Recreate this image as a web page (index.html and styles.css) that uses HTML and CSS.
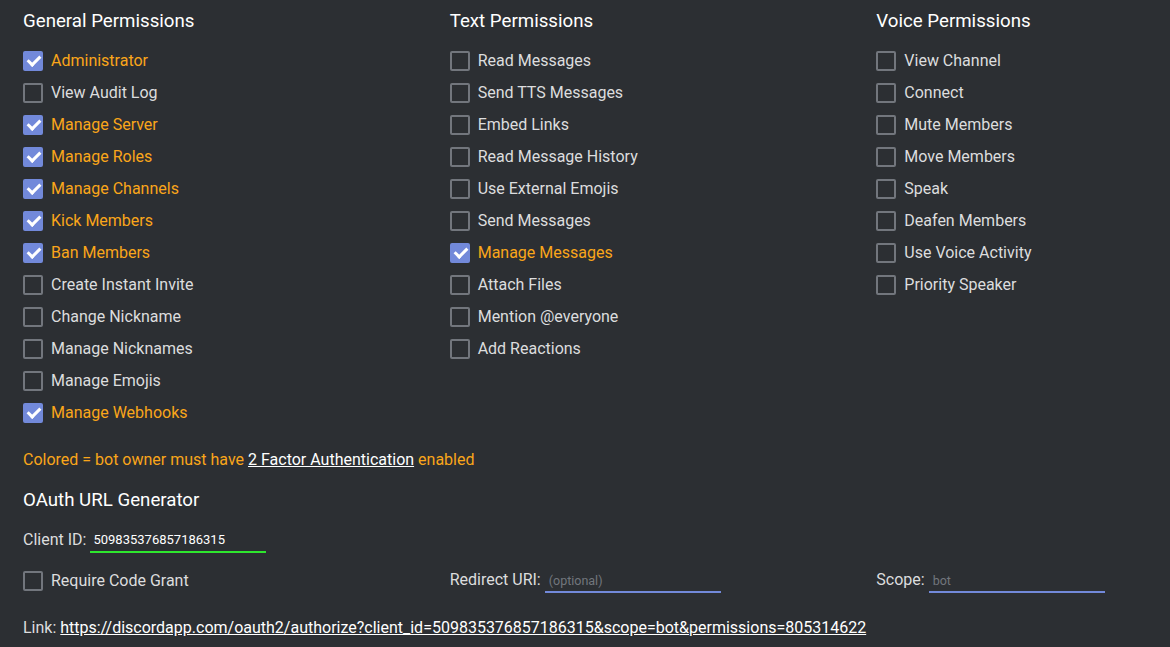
FILE: index.html
```html
<!DOCTYPE html>
<html>
<head>
<meta charset="utf-8">
<link rel="stylesheet" href="styles.css">
</head>
<body>
<div class="page">
  <div class="perms">
    <div class="col">
      <h2 class="title">General Permissions</h2>
      <div class="row on"><span class="box"></span><span>Administrator</span></div>
      <div class="row"><span class="box"></span><span>View Audit Log</span></div>
      <div class="row on"><span class="box"></span><span>Manage Server</span></div>
      <div class="row on"><span class="box"></span><span>Manage Roles</span></div>
      <div class="row on"><span class="box"></span><span>Manage Channels</span></div>
      <div class="row on"><span class="box"></span><span>Kick Members</span></div>
      <div class="row on"><span class="box"></span><span>Ban Members</span></div>
      <div class="row"><span class="box"></span><span>Create Instant Invite</span></div>
      <div class="row"><span class="box"></span><span>Change Nickname</span></div>
      <div class="row"><span class="box"></span><span>Manage Nicknames</span></div>
      <div class="row"><span class="box"></span><span>Manage Emojis</span></div>
      <div class="row on"><span class="box"></span><span>Manage Webhooks</span></div>
    </div>
    <div class="col">
      <h2 class="title">Text Permissions</h2>
      <div class="row"><span class="box"></span><span>Read Messages</span></div>
      <div class="row"><span class="box"></span><span>Send TTS Messages</span></div>
      <div class="row"><span class="box"></span><span>Embed Links</span></div>
      <div class="row"><span class="box"></span><span>Read Message History</span></div>
      <div class="row"><span class="box"></span><span>Use External Emojis</span></div>
      <div class="row"><span class="box"></span><span>Send Messages</span></div>
      <div class="row on"><span class="box"></span><span>Manage Messages</span></div>
      <div class="row"><span class="box"></span><span>Attach Files</span></div>
      <div class="row"><span class="box"></span><span>Mention @everyone</span></div>
      <div class="row"><span class="box"></span><span>Add Reactions</span></div>
    </div>
    <div class="col">
      <h2 class="title">Voice Permissions</h2>
      <div class="row"><span class="box"></span><span>View Channel</span></div>
      <div class="row"><span class="box"></span><span>Connect</span></div>
      <div class="row"><span class="box"></span><span>Mute Members</span></div>
      <div class="row"><span class="box"></span><span>Move Members</span></div>
      <div class="row"><span class="box"></span><span>Speak</span></div>
      <div class="row"><span class="box"></span><span>Deafen Members</span></div>
      <div class="row"><span class="box"></span><span>Use Voice Activity</span></div>
      <div class="row"><span class="box"></span><span>Priority Speaker</span></div>
    </div>
  </div>

  <p class="note">Colored = bot owner must have <a href="#">2 Factor Authentication</a> enabled</p>

  <h2 class="title oauth">OAuth URL Generator</h2>

  <div class="client">
    <span class="label">Client ID:</span>
    <span class="field green"><span class="value">509835376857186315</span></span>
  </div>

  <div class="opts">
    <div class="row opt"><span class="box"></span><span>Require Code Grant</span></div>
    <div class="inline">
      <span class="label">Redirect URI:</span>
      <span class="field blue"><span class="ph">(optional)</span></span>
    </div>
    <div class="inline">
      <span class="label">Scope:</span>
      <span class="field blue"><span class="ph">bot</span></span>
    </div>
  </div>

  <p class="link">Link: <a href="#">https://discordapp.com/oauth2/authorize?client_id=509835376857186315&amp;scope=bot&amp;permissions=805314622</a></p>
</div>
</body>
</html>
```

FILE: styles.css
```css
html, body {
  margin: 0;
  padding: 0;
  background: #2c2f33;
}
body {
  font-family: Roboto, "Liberation Sans", sans-serif;
  color: #dcddde;
  font-size: 16px;
  overflow: hidden;
}
.page {
  padding: 10px 0 0 23px;
}
.perms {
  display: grid;
  grid-template-columns: 426.67px 426.67px 1fr;
}
.title {
  margin: 0 0 13px 0;
  font-size: 18.7px;
  line-height: 22px;
  font-weight: 400;
  color: #ffffff;
}
.row {
  display: flex;
  align-items: center;
  gap: 8px;
  height: 32px;
  line-height: 20px;
}
.box {
  width: 16px;
  height: 16px;
  border: 2px solid #72767d;
  border-radius: 2px;
  flex: none;
  position: relative;
}
.row.on {
  color: #faa61a;
}
.row.on .box {
  background: #7289da;
  border-color: #7289da;
}
.row.on .box::after {
  content: "";
  position: absolute;
  left: 5px;
  top: 0px;
  width: 5px;
  height: 10px;
  border: solid #ffffff;
  border-width: 0 3px 3px 0;
  transform: rotate(45deg);
}
.note {
  margin: 21px 0 0 0;
  line-height: 20px;
  color: #faa61a;
}
.note a {
  color: #ffffff;
  text-decoration: underline;
}
.oauth {
  margin: 19px 0 0 0;
}
.client {
  display: flex;
  align-items: flex-end;
  margin-top: 13px;
  height: 26px;
}
.label {
  line-height: 20px;
  color: #dcddde;
}
.field {
  display: inline-block;
  width: 176px;
  height: 22px;
  margin-left: 4px;
  border-bottom: 2px solid #7289da;
  box-sizing: border-box;
  position: relative;
  top: 3px;
}
.field.green {
  border-bottom-color: #2ee62e;
}
.value {
  display: block;
  padding-left: 3px;
  font-size: 13px;
  line-height: 18px;
  color: #ffffff;
  font-weight: 400;
}
.ph {
  display: block;
  padding-left: 4px;
  font-size: 12.5px;
  line-height: 20px;
  color: #72767d;
}
.opts {
  display: grid;
  grid-template-columns: 426.67px 426.67px 1fr;
  margin-top: 14px;
  align-items: start;
}
.opt {
  margin-top: 1px;
}
.inline {
  display: flex;
  align-items: flex-end;
  height: 26px;
}
.link {
  margin: 21px 0 0 0;
  line-height: 20px;
}
.link a {
  color: #ffffff;
  text-decoration: underline;
}
```
